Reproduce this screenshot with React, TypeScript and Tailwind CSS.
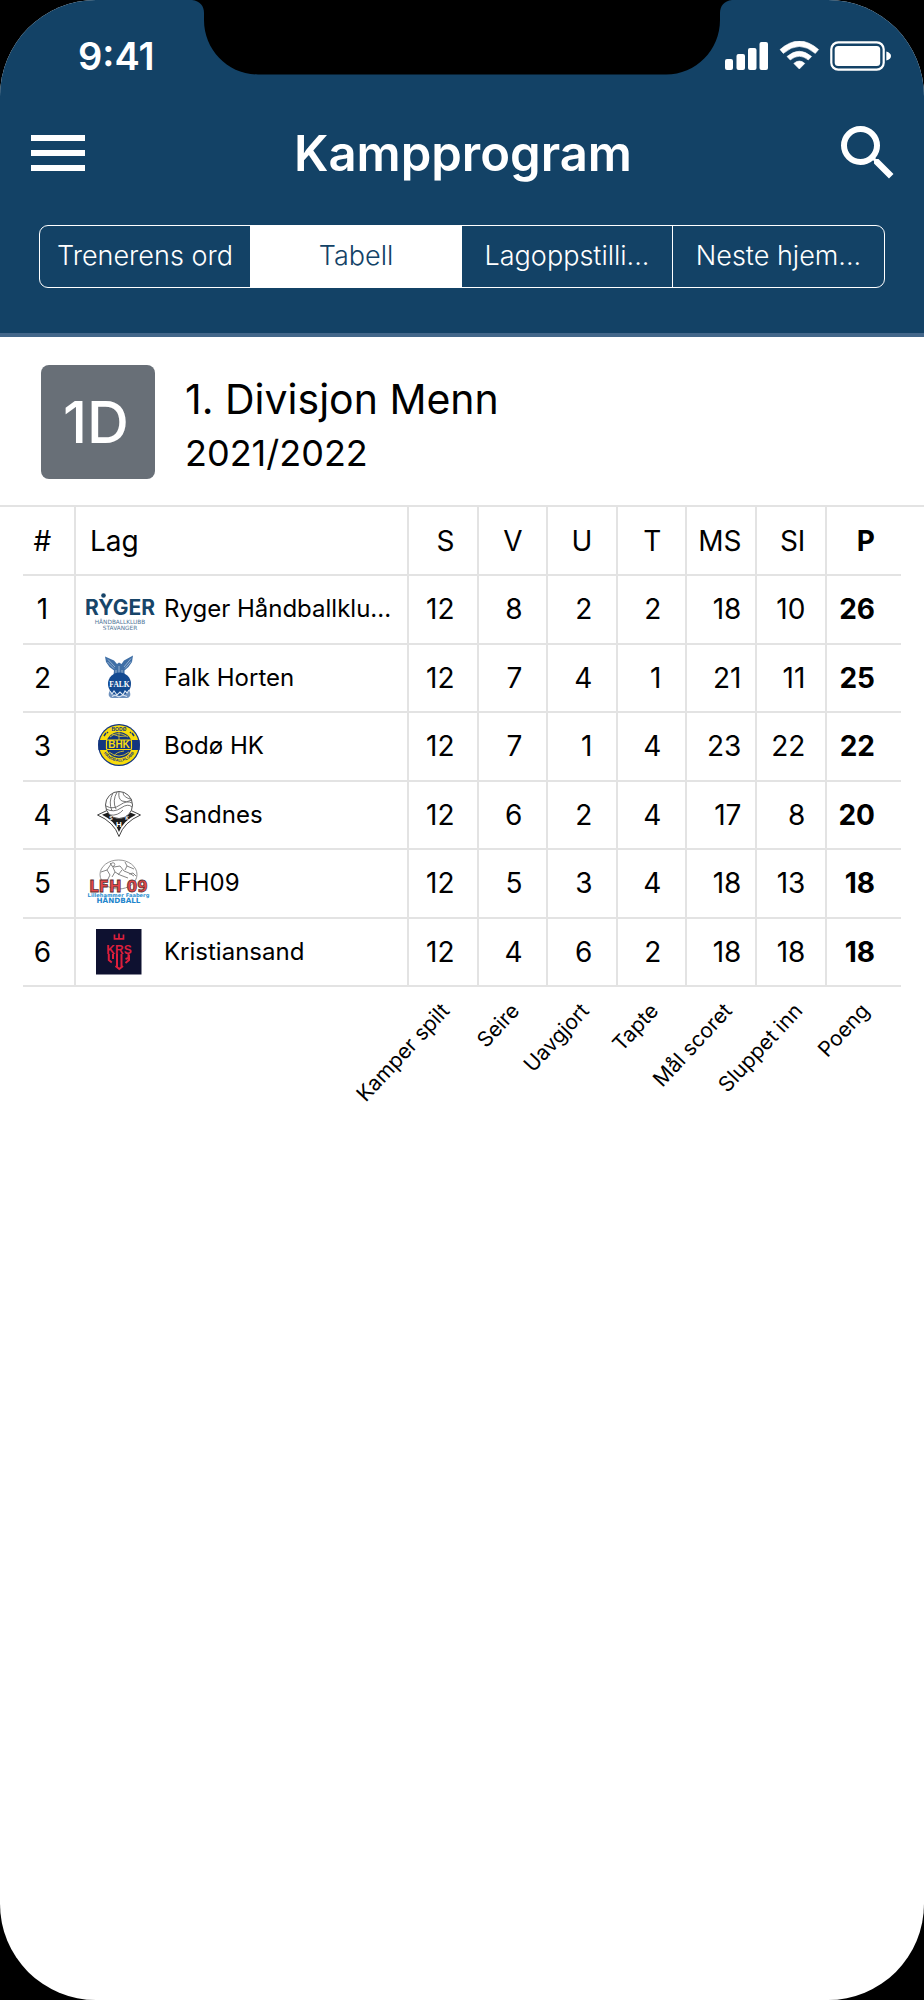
import { MdMenu, MdSearch } from "react-icons/md";
import type { ReactNode } from "react";

const tabs = ["Trenerens ord", "Tabell", "Lagoppstilli...", "Neste hjem..."];
const activeTab = "Tabell";

type Column = { short: string; label: string; width: string; pad: string; labelPad: string; bold?: boolean };

const columns: Column[] = [
  { short: "S", label: "Kamper spilt", width: "w-[7.97%]", pad: "pr-[22px]", labelPad: "pr-8" },
  { short: "V", label: "Seire", width: "w-[7.97%]", pad: "pr-6", labelPad: "pr-8" },
  { short: "U", label: "Uavgjort", width: "w-[7.97%]", pad: "pr-6", labelPad: "pr-8" },
  { short: "T", label: "Tapte", width: "w-[7.86%]", pad: "pr-6", labelPad: "pr-8" },
  { short: "MS", label: "Mål scoret", width: "w-[7.97%]", pad: "pr-[14px]", labelPad: "pr-7" },
  { short: "SI", label: "Sluppet inn", width: "w-[7.97%]", pad: "pr-5", labelPad: "pr-7" },
  { short: "P", label: "Poeng", width: "w-[8.5%]", pad: "pr-[26px]", labelPad: "pr-9", bold: true },
];

function LogoFrame({ children, title }: { children: ReactNode; title: string }) {
  return (
    <svg viewBox="0 0 74 48" className="h-12 w-[74px] shrink-0" role="img" aria-label={title}>
      {children}
    </svg>
  );
}

function RygerLogo() {
  return (
    <LogoFrame title="Ryger">
      <g fill="#174569" textAnchor="middle">
        <circle cx="21.5" cy="10.5" r="2.3" />
        <text x="38" y="30" fontFamily="Inter, sans-serif" fontWeight="700" fontSize="21">RYGER</text>
        <g fontFamily="DejaVu Sans, sans-serif" fill="#55799a">
          <text x="38" y="39" fontSize="5.8">HÅNDBALLKLUBB</text>
          <text x="38" y="44.500" fontSize="5.8">STAVANGER</text>
        </g>
      </g>
    </LogoFrame>
  );
}

function FalkLogo() {
  return (
    <LogoFrame title="Falk">
      <path d="M23 2.5 32 6.5 35 10 37 8.5 39.500 10 42 6.500 51 1.500 50 8 46.500 13 42.500 16.500 42.500 21 31.500 21 32 16.500 27.500 13 24 8Z" fill="#3f6fa6" />
      <path d="M26 5.500 33 13M25.500 8 32 14.500M49 4.500 42 13M49 7.500 43 14.500M34 16v4M37 12v8M40 16v4" stroke="#a9c0da" strokeWidth=".8" fill="none" />
      <path d="M28 36q-2 4-1 6 1 2 3 2H45q2 0 3-2 1-2-1-6Z" fill="#6d90bd" />
      <circle cx="37.500" cy="30" r="11.500" fill="#134a91" />
      <path d="m28 37 2 3 2-3 3 4 3-3 3 3 2-4 2 2 2-3M30 42.500l3-1.500 4 2 4-2 4 1.500" stroke="#dce6f2" strokeWidth="1.100" fill="none" />
      <text x="37.500" y="32.500" textAnchor="middle" fill="#fff" fontFamily="Liberation Serif, serif" fontWeight="700" fontSize="7.500">FALK</text>
    </LogoFrame>
  );
}

function BodoLogo() {
  return (
    <LogoFrame title="Bodø">
      <circle cx="37" cy="23" r="21" fill="#12357f" />
      <circle cx="37" cy="23" r="19.800" fill="#f8dc0c" />
      <circle cx="37" cy="23" r="13" fill="#12357f" />
      <path d="M28 15q8-7 18 0M37 10v8M27 30q10 8 20 0M32 34q2-4 10-5M30 12q8 4 14 2" stroke="#d5c233" strokeWidth=".9" fill="none" />
      <path d="M16.500 18h41v10h-41Z" fill="#12357f" />
      <rect x="24.500" y="18" width="25" height="9.500" rx="1" fill="#12357f" stroke="#f8dc0c" strokeWidth="1.200" />
      <g fontFamily="Liberation Sans, sans-serif" fontWeight="700" textAnchor="middle">
        <text x="37" y="26.200" fontSize="10" fill="#f8dc0c">BHK</text>
        <text x="37" y="8.600" fontSize="5" fill="#12357f">BODØ</text>
      </g>
      <path id="bodo-ring" d="M20 27A17.800 17.800 0 0 0 54 27" fill="none" />
      <text fontFamily="Liberation Sans, sans-serif" fontWeight="700" fontSize="4" fill="#12357f">
        <textPath href="#bodo-ring" startOffset="50%" textAnchor="middle">HÅNDBALLKLUBB</textPath>
      </text>
      <path d="m22 14 2-3M25 11l1-1M52 14l-2-3M49 11l-1-1" stroke="#12357f" strokeWidth="1.500" />
    </LogoFrame>
  );
}

function SandnesLogo() {
  return (
    <LogoFrame title="Sandnes">
      <path d="M15.500 24 25 19.500H49L58.500 24Q42 31 37 45.500 32 31 15.500 24Z" fill="#fff" stroke="#444" strokeWidth="1" />
      <path d="M20 23.800 26 21.500H48L54 23.800Q41 30 37 41 33 30 20 23.800Z" fill="#1d1d1d" />
      <circle cx="37" cy="14" r="13.500" fill="#fff" stroke="#555" strokeWidth="1" />
      <path d="M31 2q-5 9-1 18M35 1q-5 9-1 17M24 15q7 4 14-1T50 12M37 1q-1 7 3 9t10-1M41 1.500q0 5 9 7M24 18q8 4 15-1t11-1M28 24q8 1 13-5" stroke="#666" strokeWidth=".9" fill="none" />
      <g fill="#fff" fontFamily="Liberation Sans, sans-serif" fontWeight="700" textAnchor="middle">
        <text x="37" y="36" fontSize="8">H</text>
        <text x="29" y="29" fontSize="5">S</text>
        <text x="45" y="29" fontSize="5">K</text>
      </g>
    </LogoFrame>
  );
}

function LfhLogo() {
  return (
    <LogoFrame title="LFH09">
      <ellipse cx="36.500" cy="15.500" rx="18.500" ry="14.500" fill="#fff" stroke="#888" strokeWidth=".9" />
      <path d="M19 13l6-2 3 5-3 6M25 11l4-6M28 4l4 4 6-1 4 5 5 2 5 3M30 6l3 7 5 3 8 3M33 13l-3 5M40 11l-4 5M43 3l2 4 7 3M45 7l-2 4M47 15l4-1 3 3" stroke="#777" strokeWidth=".9" fill="none" />
      <circle cx="31" cy="5.500" r="1.800" fill="#fff" stroke="#777" strokeWidth=".8" />
      <g textAnchor="middle" fontFamily="DejaVu Sans, sans-serif" fontWeight="700">
        <text x="36.500" y="32.500" fontSize="15" fill="#e8484a" stroke="#5c3030" strokeWidth=".8">LFH 09</text>
        <text x="36.500" y="37.800" fontSize="5.200" fill="#2b8fd0">Lillehammer Faaberg</text>
        <text x="36.500" y="44" fontSize="7.200" fill="#1f86cc">HÅNDBALL</text>
      </g>
    </LogoFrame>
  );
}

function KristiansandLogo() {
  return (
    <LogoFrame title="Kristiansand">
      <rect x="14" y="1" width="45.500" height="45.500" fill="#0e1130" />
      <g stroke="#dc1f3c" fill="none">
        <path d="M32.500 6.500v4.300h9V6.500M37 5.500v5" strokeWidth="1.700" />
        <path d="M26.800 26v6l3 2.500M31 26v5M35 26v14M39.500 26v14M43.500 31l3-1v-4M47 27v5l-3.500 3M33.500 38l3.800 3 3.700-3" strokeWidth="2" />
      </g>
      <text x="37" y="26" textAnchor="middle" fill="#dc1f3c" fontFamily="Liberation Sans, sans-serif" fontWeight="700" fontSize="12">KRS</text>
    </LogoFrame>
  );
}

const teams: { name: string; logo: ReactNode; stats: number[] }[] = [
  { name: "Ryger Håndballklu...", logo: <RygerLogo />, stats: [12, 8, 2, 2, 18, 10, 26] },
  { name: "Falk Horten", logo: <FalkLogo />, stats: [12, 7, 4, 1, 21, 11, 25] },
  { name: "Bodø HK", logo: <BodoLogo />, stats: [12, 7, 1, 4, 23, 22, 22] },
  { name: "Sandnes", logo: <SandnesLogo />, stats: [12, 6, 2, 4, 17, 8, 20] },
  { name: "LFH09", logo: <LfhLogo />, stats: [12, 5, 3, 4, 18, 13, 18] },
  { name: "Kristiansand", logo: <KristiansandLogo />, stats: [12, 4, 6, 2, 18, 18, 18] },
];

function Notch() {
  return (
    <svg viewBox="0 0 540 75" className="absolute top-0 left-1/2 h-[75px] w-[540px] -translate-x-1/2" aria-hidden="true">
      <path d="M0 0C8 1 12 6 12 13V20C12 50 36 74.500 66 74.500H474C504 74.500 528 50 528 20V13C528 6 532 1 540 0Z" fill="#000" />
    </svg>
  );
}

function StatusBar() {
  return (
    <div className="flex h-[112px] items-center justify-between pr-8 pl-[78px] text-white">
      <span className="text-[38px] leading-none font-semibold">9:41</span>
      <svg viewBox="0 0 168 30" className="h-[30px] w-[168px]" fill="#fff" aria-label="Signal, Wi-Fi, batteri" role="img">
        <rect x="1" y="18" width="8" height="11" rx="2" />
        <rect x="12.500" y="13" width="8.500" height="16" rx="2" />
        <rect x="24" y="7" width="8.500" height="22" rx="2" />
        <rect x="35.500" y="1" width="8.500" height="28" rx="2" />
        <path d="M56 8.600Q75.300-8.500 94.600 8.600L91.300 12.400Q75.300-1.500 59.300 12.400Z" strokeLinejoin="round" stroke="#fff" strokeWidth=".6" />
        <path d="M63 15.500Q75.300 5 87.600 15.500L84.300 19Q75.300 11.500 66.300 19Z" strokeLinejoin="round" stroke="#fff" strokeWidth=".6" />
        <path d="M69.800 22.400Q75.300 17.700 80.800 22.400L75.300 28Z" strokeLinejoin="round" stroke="#fff" strokeWidth=".6" />
        <rect x="107.300" y="1.300" width="52.400" height="27.400" rx="7" fill="none" stroke="#fff" strokeWidth="2.200" />
        <rect x="110.700" y="5" width="45.500" height="20" rx="3.500" />
        <path d="M162.300 10.500C165.500 11.500 167 13 167 15S165.500 18.500 162.300 19.500Z" />
      </svg>
    </div>
  );
}

export default function App() {
  return (
    <div className="min-h-screen bg-black font-['Inter','Liberation_Sans',sans-serif]">
      <div className="relative flex min-h-screen flex-col overflow-hidden rounded-[96px] bg-white text-black">
        <header className="border-b-4 border-[#43678a] bg-[#134266] pb-[45px] text-white">
          <StatusBar />
          <div className="mt-[5px] flex items-center justify-between pr-5 pl-[22px]">
            <button type="button" aria-label="Meny">
              <MdMenu className="size-[72px]" />
            </button>
            <h1 className="pt-0.5 text-[49px] leading-[70px] font-semibold">Kampprogram</h1>
            <button type="button" aria-label="Søk">
              <MdSearch className="size-[72px]" />
            </button>
          </div>
          <nav className="mx-[39px] mt-9 grid h-[63px] grid-cols-4 divide-x divide-white overflow-hidden rounded-[9px] border border-white">
            {tabs.map((tab) => (
              <button
                key={tab}
                type="button"
                aria-current={tab === activeTab ? "page" : undefined}
                className={
                  tab === activeTab
                    ? "bg-white text-[27px] font-light whitespace-nowrap text-[#134266]"
                    : "text-[27px] font-light whitespace-nowrap text-white"
                }
              >
                {tab}
              </button>
            ))}
          </nav>
        </header>

        <section className="flex items-center gap-[30px] px-[41px] pt-7 pb-[26px]">
          <div className="flex size-[114px] shrink-0 items-center justify-center rounded-lg bg-[#686f77] pr-1 text-[58px] font-medium text-white">
            1D
          </div>
          <div className="pt-1.5">
            <h2 className="text-[41px] leading-[56px]">1. Divisjon Menn</h2>
            <p className="text-[36px] leading-[52px]">2021/2022</p>
          </div>
        </section>

        <div className="border-t-2 border-[#e3e3e3] px-[23px]">
          <table className="h-[480px] w-full table-fixed border-collapse">
            <thead>
              <tr className="h-[68px] border-b-2 border-[#e3e3e3] text-[28px] leading-8">
                <th scope="col" className="w-[5.92%] p-0 pr-3 text-center font-normal">#</th>
                <th scope="col" className="border-l-2 border-[#e3e3e3] p-0 pl-[14px] text-left font-normal">Lag</th>
                {columns.map((c) => (
                  <th
                    key={c.short}
                    scope="col"
                    className={`border-l-2 border-[#e3e3e3] text-right ${c.width} ${c.pad} ${c.bold ? "font-bold" : "font-normal"}`}
                  >
                    {c.short}
                  </th>
                ))}
              </tr>
            </thead>
            <tbody>
              {teams.map((team, i) => (
                <tr key={team.name} className="h-[68px] border-b-2 border-[#e3e3e3] text-[28px] leading-8">
                  <td className="p-0 pr-3 text-center">{i + 1}</td>
                  <td className="border-l-2 border-[#e3e3e3] p-0 pl-[6px]">
                    <div className="flex items-center gap-2">
                      {team.logo}
                      <span className="text-[24px] whitespace-nowrap">{team.name}</span>
                    </div>
                  </td>
                  {team.stats.map((value, j) => (
                    <td
                      key={columns[j].short}
                      className={`border-l-2 border-[#e3e3e3] text-right ${columns[j].pad} ${columns[j].bold ? "font-bold" : ""}`}
                    >
                      {value}
                    </td>
                  ))}
                </tr>
              ))}
            </tbody>
          </table>
          <div className="flex pt-1.5">
            <div className="flex-1" />
            {columns.map((c) => (
              <div key={c.short} className={`flex justify-end ${c.labelPad} ${c.width}`}>
                <span className="origin-right -rotate-47 text-[21px] leading-7 whitespace-nowrap">{c.label}</span>
              </div>
            ))}
          </div>
        </div>
        <Notch />
      </div>
    </div>
  );
}
